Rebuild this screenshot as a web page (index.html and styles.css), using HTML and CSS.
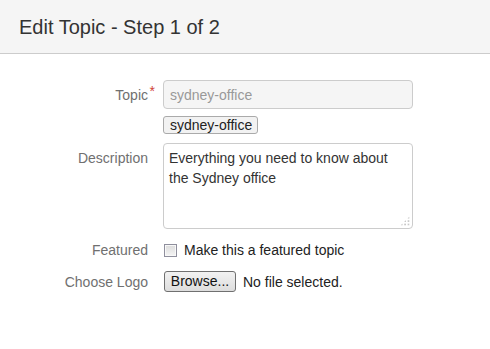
FILE: index.html
```html
<!DOCTYPE html>
<html>
<head>
<meta charset="utf-8">
<link rel="stylesheet" href="styles.css">
</head>
<body>
<header class="page-header">
  <h1 class="page-title">Edit Topic - Step 1 of 2</h1>
</header>
<form class="form">
  <label class="form-label label-topic">Topic<span class="req">*</span></label>
  <div class="field">
    <input class="text-input" type="text" value="sydney-office" disabled>
    <div class="tags"><span class="tag">sydney-office</span></div>
  </div>

  <label class="form-label label-desc">Description</label>
  <div class="field">
    <div class="textarea">Everything you need to know about the Sydney office<span class="grip"></span></div>
  </div>

  <label class="form-label label-feat">Featured</label>
  <div class="field check-row">
    <span class="checkbox"></span>
    <span class="check-text">Make this a featured topic</span>
  </div>

  <label class="form-label label-logo">Choose Logo</label>
  <div class="field file-row">
    <span class="browse">Browse...</span>
    <span class="no-file">No file selected.</span>
  </div>
</form>
</body>
</html>
```
FILE: styles.css
```css
html, body {
  margin: 0;
  padding: 0;
  background: #fff;
  font-family: "Liberation Sans", Arial, sans-serif;
  color: #333;
}
.page-header {
  height: 53px;
  background: #f5f5f5;
  border-bottom: 1px solid #cccccc;
  display: flex;
  align-items: center;
  padding-left: 19px;
}
.page-title {
  margin: 0;
  font-size: 20px;
  font-weight: normal;
  color: #333;
  position: relative;
  top: 1px;
}
.form {
  display: grid;
  grid-template-columns: 148px 250px;
  column-gap: 15px;
  padding-top: 26px;
  font-size: 14px;
}
.form-label {
  text-align: right;
  color: #707070;
  line-height: 20px;
}
.label-topic { padding-top: 5px; position: relative; }
.req {
  color: #d04437;
  position: absolute;
  right: -7px;
  top: 1px;
  font-size: 14px;
}
.text-input {
  box-sizing: border-box;
  display: block;
  width: 250px;
  height: 29px;
  margin: 0;
  border: 1px solid #cccccc;
  border-radius: 4px;
  background: #f5f5f5;
  padding: 0 6px;
  font: 14px "Liberation Sans", Arial, sans-serif;
  color: #999;
}
.tags { padding-top: 7px; height: 18px; }
.tag {
  display: inline-block;
  box-sizing: border-box;
  height: 18px;
  line-height: 16px;
  padding: 0 5px 0 6px;
  border: 1px solid #aaaaaa;
  border-radius: 3px;
  background: #f2f2f2;
  color: #222;
  font-size: 14px;
}
.label-desc { padding-top: 14px; }
.textarea {
  box-sizing: border-box;
  width: 250px;
  height: 86px;
  margin-top: 9px;
  border: 1px solid #cccccc;
  border-radius: 4px;
  padding: 4px 5px;
  line-height: 20px;
  color: #333;
  position: relative;
}
.grip {
  position: absolute;
  right: 2px;
  bottom: 2px;
  width: 10px;
  height: 10px;
  background:
    radial-gradient(circle, #c8c8c8 1.2px, transparent 1.3px) 0 0 / 3.4px 3.4px;
  clip-path: polygon(100% 0, 100% 100%, 0 100%);
}
.label-feat { padding-top: 11px; }
.check-row {
  display: flex;
  align-items: center;
  padding-top: 11px;
  line-height: 20px;
}
.checkbox {
  box-sizing: border-box;
  width: 13px;
  height: 13px;
  margin-left: 1px;
  border: 1px solid #8f8f9d;
  background: linear-gradient(#dcdcdc, #f4f4f4);
  box-shadow: inset 0 0 0 1px #f8f8f8;
}
.check-text { margin-left: 7px; color: #222; }
.label-logo { padding-top: 12px; }
.file-row {
  display: flex;
  align-items: center;
  padding-top: 11px;
}
.browse {
  box-sizing: border-box;
  margin-left: 1px;
  width: 72px;
  height: 21px;
  border: 1px solid #707070;
  border-radius: 3px;
  background: linear-gradient(#f2f2f2, #dddddd);
  color: #111;
  font-size: 14px;
  line-height: 19px;
  text-align: center;
}
.no-file { margin-left: 7px; color: #222; }
```
